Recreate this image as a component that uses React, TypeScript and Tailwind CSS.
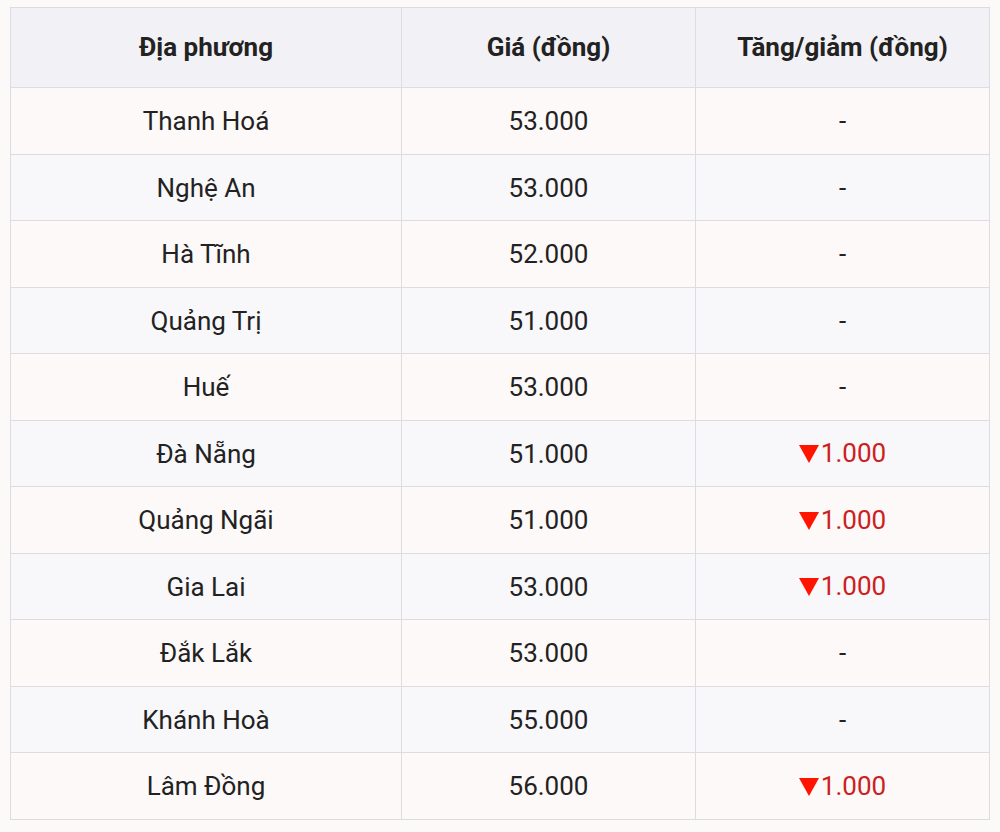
const rows: { name: string; price: string; change: string | null }[] = [
  { name: "Thanh Hoá", price: "53.000", change: null },
  { name: "Nghệ An", price: "53.000", change: null },
  { name: "Hà Tĩnh", price: "52.000", change: null },
  { name: "Quảng Trị", price: "51.000", change: null },
  { name: "Huế", price: "53.000", change: null },
  { name: "Đà Nẵng", price: "51.000", change: "1.000" },
  { name: "Quảng Ngãi", price: "51.000", change: "1.000" },
  { name: "Gia Lai", price: "53.000", change: "1.000" },
  { name: "Đắk Lắk", price: "53.000", change: null },
  { name: "Khánh Hoà", price: "55.000", change: null },
  { name: "Lâm Đồng", price: "56.000", change: "1.000" },
];

export default function App() {
  return (
    <div
      className="min-h-[832px] w-[1000px] bg-[#fcfaf9] pt-[7px] pl-[10px]"
      style={{ fontFamily: "Roboto, 'Noto Sans', sans-serif" }}
    >
      <table className="w-[979px] border-collapse text-[#222] text-[26px] table-fixed">
        <colgroup>
          <col className="w-[391px]" />
          <col className="w-[294px]" />
          <col className="w-[294px]" />
        </colgroup>
        <thead>
          <tr className="h-[80px] bg-[#f2f1f5]">
            <th className="border border-[#dddce1] font-bold text-[26px] text-center">Địa phương</th>
            <th className="border border-[#dddce1] font-bold text-[26px] text-center">Giá (đồng)</th>
            <th className="border border-[#dddce1] font-bold text-[26px] text-center">Tăng/giảm (đồng)</th>
          </tr>
        </thead>
        <tbody>
          {rows.map((r, i) => (
            <tr key={r.name} className={`h-[66.5px] ${i % 2 === 0 ? "bg-[#fcf9f8]" : "bg-[#f8f7fa]"}`}>
              <td className="border border-[#dddce1] text-center pt-[2px]">{r.name}</td>
              <td className="border border-[#dddce1] text-center pt-[2px]">{r.price}</td>
              <td className="border border-[#dddce1] text-center pt-[2px]">
                {r.change ? (
                  <span className="inline-flex items-center gap-[2px] text-[#cc2020]">
                    <svg width="20" height="18" viewBox="0 0 20 18" className="mt-[1px]">
                      <polygon points="0,0 20,0 10,18" fill="#ff1400" />
                    </svg>
                    {r.change}
                  </span>
                ) : (
                  "-"
                )}
              </td>
            </tr>
          ))}
        </tbody>
      </table>
    </div>
  );
}
